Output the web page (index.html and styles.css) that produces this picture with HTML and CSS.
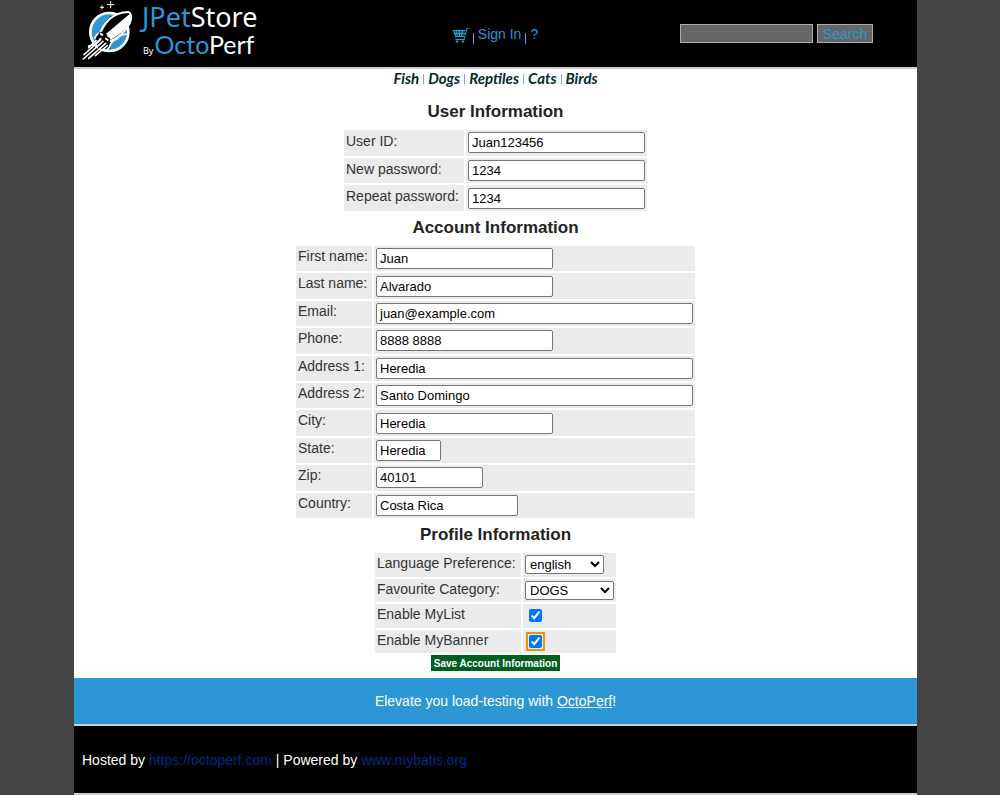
FILE: index.html
```html
<!DOCTYPE html>
<html lang="en">
<head>
<meta charset="utf-8">
<title>JPetStore Demo</title>
<link rel="stylesheet" href="styles.css">
</head>
<body>
<header class="header">
  <a class="logo" href="#" aria-label="JPetStore by OctoPerf">
    <svg class="rocket" viewBox="12 0 162 186" aria-hidden="true">
      <circle cx="94" cy="96" r="57" fill="#2c97d4" stroke="#fff" stroke-width="8"/>
      <path d="M98 48 L126 50 L150 82 L112 116 Q88 130 98 146 L60 148 L52 112 Q72 100 70 84Z" fill="#000"/>
      <path d="M86 66 Q72 80 68 96 Q54 102 50 116" fill="none" stroke="#fff" stroke-width="5"/>
      <path d="M146 102 Q126 104 118 116 Q104 120 98 132 Q96 142 86 150" fill="none" stroke="#fff" stroke-width="5"/>
      <path d="M152 36 Q164 44 157 65 Q151 82 131 101 Q113 118 96 123 L68 98 Q76 76 94 58 Q116 37 152 36Z" fill="#000" stroke="#fff" stroke-width="6" stroke-linejoin="round"/>
      <path d="M154 43 Q161 51 154 68 Q146 84 128 99 Q112 113 98 119 L80 105Z" fill="#fff"/>
      <circle cx="70" cy="104" r="9"/><circle cx="87" cy="119" r="9"/><circle cx="78" cy="110" r="10"/>
      <path d="M68 101 l5 4 M84 116 l5 4" stroke="#fff" stroke-width="6" stroke-linecap="round"/>
      <path d="M68 116 L52 132 L32 138 M54 122 L32 143 M68 119 L18 164 M75 124 L16 177 M83 130 L32 175 M88 137 L52 167" fill="none" stroke="#fff" stroke-width="5" stroke-linecap="round"/>
      <path d="M98 3v22M87 14h22M72 16v12M66 22h12" stroke="#fff" stroke-width="3"/>
    </svg>
    <span class="logo-words">
      <span class="logo-top"><span class="blue">JPet</span>Store</span>
      <span class="logo-bottom"><small>By</small><span class="blue">Octo</span>Perf</span>
    </span>
  </a>
  <nav class="account-menu" aria-label="Account">
    <a href="#" aria-label="Cart"><svg class="cart" viewBox="0 0 16 15" aria-hidden="true">
      <path d="M0 3H12L11 8H2Z" fill="#123b4d"/>
      <path d="M0 2.500H12.500M1 5.500H12M2 8.500H11.500M2.500 11.500H11.500M.500 2.500L3 9M3.500 3L4.500 8.500M6.500 3V8.500M9.500 3L8.500 8.500M15.500.500H14L11 11.500" fill="none" stroke="#1ba3cf"/>
      <path d="M2.500 13.500h3M4 12v3M8.500 13.500h3M10 12v3" stroke="#1ba3cf"/>
    </svg></a>
    <span class="bar"></span><a href="#">Sign In</a><span class="bar"></span><a href="#">?</a>
  </nav>
  <form class="search">
    <input class="search-text" type="text" aria-label="Search products">
    <button class="search-button" type="button">Search</button>
  </form>
</header>
<main class="content">
  <nav class="categories" aria-label="Categories">
    <a href="#">Fish</a><a href="#">Dogs</a><a href="#">Reptiles</a><a href="#">Cats</a><a href="#">Birds</a>
  </nav>
  <form class="account-form">
    <h3>User Information</h3>
    <table class="user">
      <tr><td><label for="uid">User ID:</label></td><td><input class="field" id="uid" type="text" value="Juan123456"></td></tr>
      <tr><td><label for="pw">New password:</label></td><td><input class="field" id="pw" type="text" value="1234"></td></tr>
      <tr><td><label for="pw2">Repeat password:</label></td><td><input class="field" id="pw2" type="text" value="1234"></td></tr>
    </table>
    <h3>Account Information</h3>
    <table class="account">
      <tr><td><label for="first">First name:</label></td><td><input class="field" id="first" type="text" value="Juan"></td></tr>
      <tr><td><label for="last">Last name:</label></td><td><input class="field" id="last" type="text" value="Alvarado"></td></tr>
      <tr><td><label for="email">Email:</label></td><td><input class="field wide" id="email" type="text" value="juan@example.com"></td></tr>
      <tr><td><label for="phone">Phone:</label></td><td><input class="field" id="phone" type="text" value="8888 8888"></td></tr>
      <tr><td><label for="a1">Address 1:</label></td><td><input class="field wide" id="a1" type="text" value="Heredia"></td></tr>
      <tr><td><label for="a2">Address 2:</label></td><td><input class="field wide" id="a2" type="text" value="Santo Domingo"></td></tr>
      <tr><td><label for="city">City:</label></td><td><input class="field" id="city" type="text" value="Heredia"></td></tr>
      <tr><td><label for="state">State:</label></td><td><input class="field tiny" id="state" type="text" value="Heredia"></td></tr>
      <tr><td><label for="zip">Zip:</label></td><td><input class="field small" id="zip" type="text" value="40101"></td></tr>
      <tr><td><label for="country">Country:</label></td><td><input class="field medium" id="country" type="text" value="Costa Rica"></td></tr>
    </table>
    <h3>Profile Information</h3>
    <table class="profile">
      <tr><td><label for="lang">Language Preference:</label></td><td><select class="language" id="lang"><option>english</option><option>japanese</option></select></td></tr>
      <tr><td><label for="cat">Favourite Category:</label></td><td><select class="category" id="cat"><option>DOGS</option><option>FISH</option><option>REPTILES</option><option>CATS</option><option>BIRDS</option></select></td></tr>
      <tr><td><label for="mylist">Enable MyList</label></td><td><input class="check" id="mylist" type="checkbox" checked></td></tr>
      <tr><td><label for="mybanner">Enable MyBanner</label></td><td><input class="check focused" id="mybanner" type="checkbox" checked></td></tr>
    </table>
    <button class="save" type="button">Save Account Information</button>
  </form>
</main>
<div class="banner">Elevate you load-testing with&nbsp;<a href="#">OctoPerf</a>!</div>
<footer class="footer">
  <p>Hosted by <a href="#">https://octoperf.com</a> | Powered by <a href="#">www.mybatis.org</a></p>
</footer>
</body>
</html>
```
FILE: styles.css
```css
* { box-sizing: border-box; }
html { background: #444; }
body {
  margin: 0 83px 0 74px;
  background: #fff;
  color: #333;
  font: 14px/18px "Liberation Sans", Arial, sans-serif;
}
.header {
  display: grid;
  grid-template-columns: repeat(3, 1fr);
  align-items: center;
  min-height: 69px;
  background: #000;
  border-bottom: 2px solid #ccc;
}
.logo {
  display: flex;
  align-items: flex-start;
  gap: 6px;
  padding-left: 8px;
  height: 67px;
  color: #fff;
  text-decoration: none;
}
.rocket { width: 54px; height: 62px; }
.logo-words { display: flex; flex-direction: column; padding-top: 3px; }
.logo-top { font: 27px/28px "Noto Sans", sans-serif; }
.logo-bottom { font: 25px/26px Lato, sans-serif; padding-left: 1px; }
.logo-bottom small { font: 9px/9px "Noto Sans", sans-serif; margin-right: 1px; }
.blue { color: #2c97d4; }
.account-menu {
  display: flex;
  justify-content: center;
  align-items: center;
  gap: 4px;
}
.account-menu a { color: #2c8fdd; text-decoration: none; }
.cart { display: block; width: 16px; height: 15px; margin-top: 4px; }
.bar { width: 1px; height: 11px; margin-top: 9px; background: #88f; }
.search { display: flex; justify-content: center; gap: 4px; }
.search-text, .search-button {
  height: 19px;
  margin: 0;
  border: 1px solid #aaa;
  background: #666;
  color: #2c97d4;
  font: 14px/16px "Liberation Sans", Arial, sans-serif;
}
.search-text { width: 133px; }
.search-button { width: 56px; padding: 0; }
.categories { display: flex; justify-content: center; height: 28px; }
.categories a {
  height: 18px;
  color: #032b2b;
  font: italic bold 15px/18px Lato, sans-serif;
  text-decoration: none;
}
.categories a + a::before {
  content: "";
  display: inline-block;
  width: 1px;
  height: 10px;
  margin: 0 4px;
  background: #99f;
}
.account-form { display: flex; flex-direction: column; align-items: center; padding-bottom: 7px; }
h3 { margin: 0; padding: 5px 0 6px; color: #222; font-size: 17px; line-height: 20px; }
table { border-spacing: 2px; }
td { padding: 0 2px; background: #ebebeb; vertical-align: middle; }
td:first-child { padding-top: 2px; vertical-align: top; white-space: nowrap; }
.user { height: 85px; }
.user td:first-child { width: 120px; }
.account { height: 276px; }
.account td:first-child { width: 76px; padding-top: 1px; }
.profile { height: 104px; }
.profile td:first-child { width: 146px; padding-top: 1px; }
.field {
  display: block;
  width: 177px;
  height: 21px;
  margin: 0;
  padding: 1px 3px;
  border: 1px solid #767676;
  border-radius: 2px;
  color: #000;
  font: 13px "Liberation Sans", Arial, sans-serif;
}
.wide { width: 317px; }
.tiny { width: 65px; }
.small { width: 107px; }
.medium { width: 142px; }
select {
  display: block;
  height: 19px;
  border: 1px solid #767676;
  border-radius: 2px;
  background: #fff;
  color: #000;
  font: 13px "Liberation Sans", Arial, sans-serif;
}
.language { width: 79px; }
.category { width: 89px; }
.check { display: block; margin: 3px 4px; width: 13px; height: 13px; accent-color: #0075ff; }
.focused { outline: 2px solid #e59700; outline-offset: 1px; border-radius: 3px; }
.save {
  height: 16px;
  padding: 0 3px;
  border: 0;
  background: #005e21;
  color: #fff;
  font: bold 10px "Liberation Sans", Arial, sans-serif;
}
.banner {
  display: flex;
  justify-content: center;
  align-items: center;
  min-height: 46px;
  background: #2c97d4;
  color: #fff;
}
.banner a { color: #fff; }
.footer {
  display: flex;
  align-items: center;
  min-height: 71px;
  padding: 0 8px;
  background: #000;
  border-top: 2px solid #ccc;
  border-bottom: 2px solid #ccc;
  color: #fff;
}
.footer p { margin: 0; }
.footer a { color: #002a8c; text-decoration: none; }
```
